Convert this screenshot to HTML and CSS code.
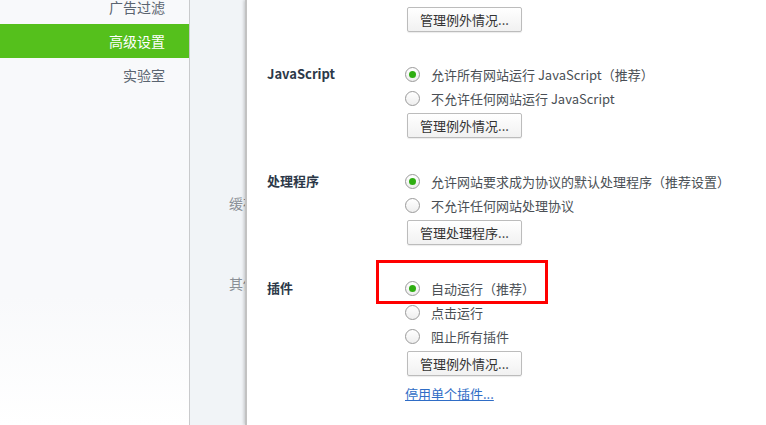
FILE: index.html
```html
<!DOCTYPE html>
<html lang="zh-CN">
<head>
  <meta charset="UTF-8">
  <title>高级设置</title>
  <link rel="stylesheet" href="styles.css">
</head>
<body>
  <div class="sidebar">
    <ul class="nav">
      <li>广告过滤</li>
      <li class="active">高级设置</li>
      <li>实验室</li>
    </ul>
  </div>

  <div class="middle">
    <div class="mlabel m1">缓存</div>
    <div class="mlabel m2">其他</div>
  </div>

  <div class="dialog">
    <div class="section first">
      <div></div>
      <div class="opts">
        <button class="btn">管理例外情况...</button>
      </div>
    </div>

    <div class="section">
      <div class="title">JavaScript</div>
      <div class="opts">
        <label class="radio"><span class="dot on"></span>允许所有网站运行 JavaScript（推荐）</label>
        <label class="radio"><span class="dot"></span>不允许任何网站运行 JavaScript</label>
        <button class="btn">管理例外情况...</button>
      </div>
    </div>

    <div class="section">
      <div class="title">处理程序</div>
      <div class="opts">
        <label class="radio"><span class="dot on"></span>允许网站要求成为协议的默认处理程序（推荐设置）</label>
        <label class="radio"><span class="dot"></span>不允许任何网站处理协议</label>
        <button class="btn">管理处理程序...</button>
      </div>
    </div>

    <div class="section">
      <div class="title">插件</div>
      <div class="opts">
        <label class="radio"><span class="dot on"></span>自动运行（推荐）</label>
        <label class="radio"><span class="dot"></span>点击运行</label>
        <label class="radio"><span class="dot"></span>阻止所有插件</label>
        <button class="btn">管理例外情况...</button>
        <a class="link" href="#">停用单个插件...</a>
      </div>
    </div>
  </div>

  <div class="mark"></div>
</body>
</html>
```

FILE: styles.css
```css
html, body { margin: 0; height: 425px; overflow: hidden; }
body { display: flex; font-family: "Noto Sans CJK SC", "Liberation Sans", sans-serif; background: #fff; position: relative; }

.sidebar { width: 189px; flex: none; border-right: 1px solid #c9cacc; background: linear-gradient(#f8f9fb 70%, #fff); }
.nav { list-style: none; margin: -10px 0 0; padding: 0; }
.nav li { height: 34px; line-height: 34px; text-align: right; padding-right: 24px; font-size: 14px; color: #5a6470; }
.nav li.active { background: #55c01c; color: #fff; }

.middle { width: 55px; flex: none; background: #f1f4f7; overflow: hidden; }
.mlabel { font-size: 14px; color: #8a8f96; padding-left: 39px; white-space: nowrap; line-height: 20px; }
.m1 { margin-top: 193px; }
.m2 { margin-top: 60px; }

.dialog { flex: 1; background: #fff; border-left: 2px solid #c2c2c2; box-shadow: -1px 0 3px rgba(0,0,0,0.2); padding: 7px 0 0 20px; }
.section { display: grid; grid-template-columns: 138px 1fr; margin-bottom: 31px; }
.section.first { margin-bottom: 30px; }
.title { font-size: 13px; font-weight: bold; color: #2c3848; line-height: 24px; }
.opts { display: flex; flex-direction: column; align-items: flex-start; }

.radio { display: flex; align-items: center; height: 24px; font-size: 13px; color: #4a4f55; white-space: nowrap; }
.dot { width: 13px; height: 13px; border: 1px solid #9a9a9a; border-radius: 50%; background: linear-gradient(#fff, #eee); margin-right: 11px; display: flex; align-items: center; justify-content: center; }
.dot.on::after { content: ""; width: 7px; height: 7px; border-radius: 50%; background: #2fae12; }

.btn { margin: 3px 0 0 2px; width: 115px; height: 25px; border: 1px solid #bcbcbc; border-radius: 2px; background: linear-gradient(#fff, #f1f1f1); box-shadow: 0 1px 1px rgba(0,0,0,0.08); font-family: inherit; font-size: 13px; color: #333; padding: 0; }
.first .btn { margin-top: 0; }

.link { margin-top: 8px; font-size: 13px; color: #2f6dc6; line-height: 20px; }

.mark { position: absolute; left: 376px; top: 260px; width: 166px; height: 38px; border: 3px solid #f00; }
```
